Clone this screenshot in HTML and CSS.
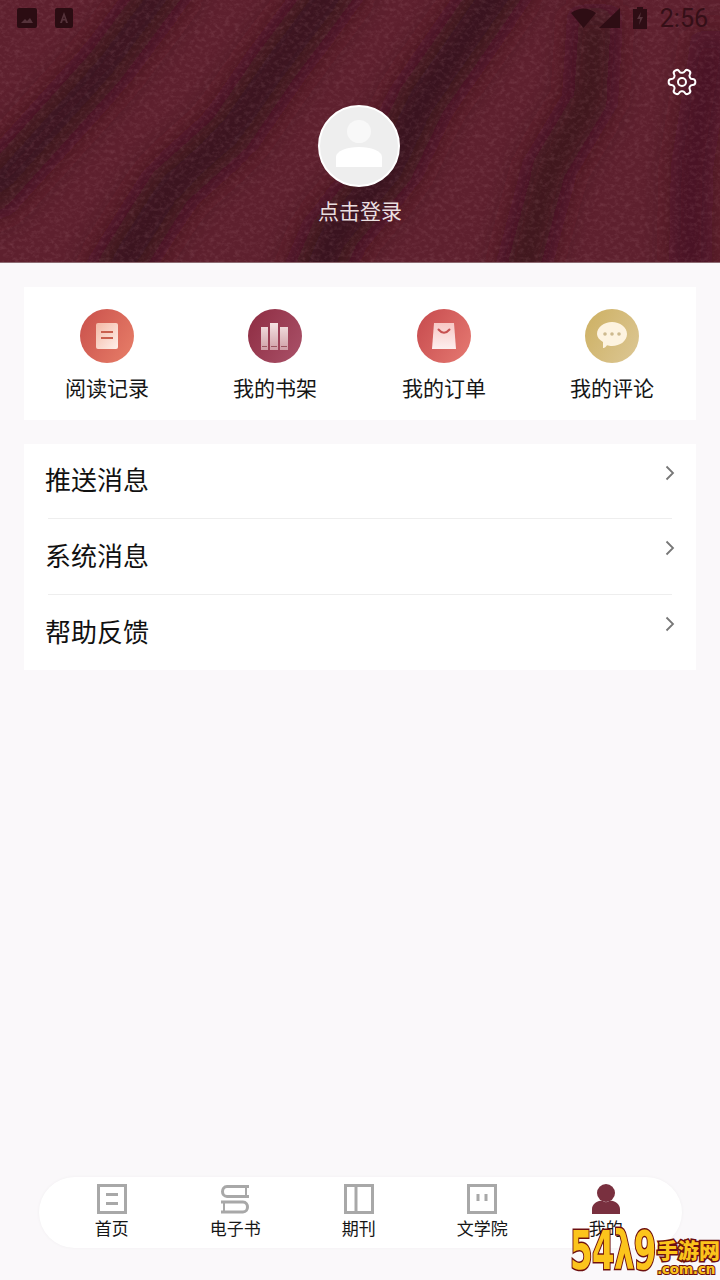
FILE: index.html
```html
<!DOCTYPE html>
<html>
<head>
<meta charset="utf-8">
<meta name="viewport" content="width=720">
<title>我的</title>
<link rel="stylesheet" href="styles.css">
</head>
<body>
<div class="page">
<header class="hero">
 <svg class="hero-bg" width="720" height="262" viewBox="0 0 720 262" preserveAspectRatio="none">
  <defs>
   <filter id="blur" x="-30%" y="-30%" width="160%" height="160%"><feGaussianBlur stdDeviation="17"/></filter>
   <filter id="grain" x="0" y="0" width="100%" height="100%">
    <feTurbulence type="fractalNoise" baseFrequency="0.2 0.26" numOctaves="4" seed="7"/>
    <feColorMatrix type="matrix" values="0 0 0 0 0.62  0 0 0 0 0.34  0 0 0 0 0.38  1.5 0 0 0 -0.66"/>
   </filter>
  </defs>
  <rect width="720" height="262" fill="#5e202e"/>
  <g fill="none" stroke="#2a0e14" stroke-linecap="round" filter="url(#blur)" opacity="0.8">
   <path d="M170 -20L105 67L60 117L-10 195" stroke-width="40"/>
   <path d="M340 -20L275 67L230 133L170 187L115 275" stroke-width="44"/>
   <path d="M505 -20L450 60L422 100L390 167L335 233L315 280" stroke-width="48"/>
   <path d="M595 20L590 100L550 167L520 280" stroke-width="34"/>
   <path d="M712 40L692 167L690 280" stroke-width="22"/>
  </g>
  <rect width="720" height="262" filter="url(#grain)" opacity="0.22"/>
 </svg>
 <div class="status">
  <div class="status-left">
   <svg width="20" height="20" viewBox="0 0 20 20"><rect width="20" height="20" rx="2" fill="#2b0c12"/><path d="M4 15l4-4 2 2 3-3 3 5z" fill="#55323a"/></svg>
   <svg width="18" height="20" viewBox="0 0 18 20"><rect width="18" height="20" rx="2" fill="#2b0c12"/><path d="M9 4l4 11h-2l-.8-2.500H7.800L7 15H5zM8.300 11h1.400L9 8.500z" fill="#55323a"/></svg>
  </div>
  <div class="status-right">
   <svg width="25" height="20" viewBox="0 0 25 20"><path d="M0 5Q12.500 -4 25 5L12.500 20z" fill="#2e0d14"/></svg>
   <svg width="21" height="20" viewBox="0 0 21 20"><path d="M21 0V20H0z" fill="#2e0d14"/></svg>
   <svg class="battery" width="14" height="22" viewBox="0 0 14 22"><path d="M4 0h6v2h4v20H0V2h4z" fill="#2e0d14"/><path d="M8 5l-4 7h3l-1 6 4-8H7z" fill="#55323a"/></svg>
   <span class="time">2:56</span>
  </div>
 </div>
 <div class="toolbar">
  <svg class="gear" width="32" height="32" viewBox="0 0 24 24" fill="none" stroke="#fff" stroke-width="1.500" stroke-linejoin="round"><g transform="rotate(90 12 12)"><path d="M12.220 2h-.44a2 2 0 0 0-2 2v.18a2 2 0 0 1-1 1.730l-.43.25a2 2 0 0 1-2 0l-.15-.08a2 2 0 0 0-2.730.73l-.22.38a2 2 0 0 0 .73 2.730l.15.1a2 2 0 0 1 1 1.720v.51a2 2 0 0 1-1 1.740l-.15.09a2 2 0 0 0-.73 2.730l.22.38a2 2 0 0 0 2.730.73l.15-.08a2 2 0 0 1 2 0l.43.25a2 2 0 0 1 1 1.730V20a2 2 0 0 0 2 2h.44a2 2 0 0 0 2-2v-.18a2 2 0 0 1 1-1.730l.43-.25a2 2 0 0 1 2 0l.15.08a2 2 0 0 0 2.730-.73l.22-.39a2 2 0 0 0-.73-2.730l-.15-.08a2 2 0 0 1-1-1.740v-.5a2 2 0 0 1 1-1.740l.15-.09a2 2 0 0 0 .73-2.730l-.22-.38a2 2 0 0 0-2.730-.73l-.15.08a2 2 0 0 1-2 0l-.43-.25a2 2 0 0 1-1-1.730V4a2 2 0 0 0-2-2z"/><circle cx="12" cy="12" r="3"/></g></svg>
 </div>
 <div class="profile">
  <div class="avatar">
   <svg width="48" height="48" viewBox="0 0 48 48"><ellipse cx="24" cy="11.500" rx="12" ry="11.500" fill="#f8f8f8"/><path d="M1 47V37C1 31 12 27 24 27S47 31 47 37V47z" fill="#fff"/></svg>
  </div>
  <div class="login">点击登录</div>
 </div>
</header>

<section class="card shortcuts">
 <div class="shortcut">
  <div class="disc disc-read">
   <svg width="24" height="28" viewBox="0 0 24 28"><defs><linearGradient id="p1" x1="0" y1="0" x2="1" y2="1"><stop offset="0" stop-color="#f3b9a6"/><stop offset="1" stop-color="#fff0ea"/></linearGradient></defs><rect x="1" y="1" width="22" height="26" rx="2" fill="url(#p1)"/><path d="M6 9h12v2H6zM6 15h12v2H6z" fill="#c9604f"/></svg>
  </div>
  <span>阅读记录</span>
 </div>
 <div class="shortcut">
  <div class="disc disc-shelf">
   <svg width="28" height="28" viewBox="0 0 28 28"><defs><linearGradient id="p2" x1="0" y1="0" x2="0" y2="1"><stop offset="0" stop-color="#f5e3e3"/><stop offset="1" stop-color="#cf9ea6"/></linearGradient></defs><path d="M0 5h7v23H0zM9 1h8v27H9zM19 5h8v23h-8z" fill="url(#p2)"/><path d="M1 24h5v1H1zM10 24h6v1h-6zM20 24h6v1h-6z" fill="#9a5560"/></svg>
  </div>
  <span>我的书架</span>
 </div>
 <div class="shortcut">
  <div class="disc disc-order">
   <svg width="24" height="26" viewBox="0 0 24 26"><defs><linearGradient id="p3" x1="0" y1="0" x2="0" y2="1"><stop offset="0" stop-color="#f7c8c5"/><stop offset="1" stop-color="#fdeeee"/></linearGradient></defs><path d="M2 0h20l2 26H0z" fill="url(#p3)"/><path d="M6.500 6.500Q12 13 17.500 6.500" fill="none" stroke="#c65050" stroke-width="2" stroke-linecap="round"/></svg>
  </div>
  <span>我的订单</span>
 </div>
 <div class="shortcut">
  <div class="disc disc-comment">
   <svg width="30" height="28" viewBox="0 0 30 28"><path d="M15 0C23 0 30 5 30 12S23 24 15 24C13 24 11.500 23.800 10 23.300C9 25 7 26.500 6 26V20C2.500 18 0 15 0 12C0 5 7 0 15 0z" fill="#fdf3e0"/><circle cx="8" cy="12" r="1.800" fill="#cdb98e"/><circle cx="15" cy="12" r="1.800" fill="#cdb98e"/><circle cx="22" cy="12" r="1.800" fill="#cdb98e"/></svg>
  </div>
  <span>我的评论</span>
 </div>
</section>

<section class="card menu">
 <div class="row"><span>推送消息</span><svg class="chev" width="10" height="16" viewBox="0 0 10 16"><path d="M1.500 1.500L8 8L1.500 14.500" fill="none" stroke="#777" stroke-width="1.800"/></svg></div>
 <div class="row"><span>系统消息</span><svg class="chev" width="10" height="16" viewBox="0 0 10 16"><path d="M1.500 1.500L8 8L1.500 14.500" fill="none" stroke="#777" stroke-width="1.800"/></svg></div>
 <div class="row"><span>帮助反馈</span><svg class="chev" width="10" height="16" viewBox="0 0 10 16"><path d="M1.500 1.500L8 8L1.500 14.500" fill="none" stroke="#777" stroke-width="1.800"/></svg></div>
</section>

<div class="spacer"></div>

<nav class="tabbar">
 <div class="tab">
  <svg width="30" height="30" viewBox="0 0 30 30" fill="none" stroke="#a8a8a8" stroke-width="3"><rect x="1.500" y="1.500" width="27" height="27"/><path d="M9 10.500h12M9 19.500h12"/></svg>
  <span>首页</span>
 </div>
 <div class="tab">
  <svg width="30" height="30" viewBox="0 0 30 30" fill="none" stroke="#a8a8a8" stroke-width="3"><path d="M29 2.500H7C1 2.500 1 12.500 7 12.500H29"/><path d="M1 18H23C29 18 29 28 23 28H1"/><path d="M26 3v9M4 18v10" stroke-width="2"/></svg>
  <span>电子书</span>
 </div>
 <div class="tab">
  <svg width="30" height="30" viewBox="0 0 30 30" fill="none" stroke="#a8a8a8" stroke-width="3"><rect x="1.500" y="1.500" width="27" height="27"/><path d="M12 1.500v27"/></svg>
  <span>期刊</span>
 </div>
 <div class="tab">
  <svg width="30" height="30" viewBox="0 0 30 30" fill="none" stroke="#a8a8a8" stroke-width="3"><rect x="1.500" y="1.500" width="27" height="27"/><path d="M11 10v7M19 10v7"/></svg>
  <span>文学院</span>
 </div>
 <div class="tab">
  <svg width="30" height="30" viewBox="0 0 30 30" fill="#79303f"><circle cx="15" cy="9" r="9"/><path d="M1 30V25C1 20 6 17 11 16.500Q15 20 19 16.500C24 17 29 20 29 25V30z"/></svg>
  <span>我的</span>
 </div>
</nav>

<div class="watermark"><span class="wm-num">54λ9</span><span class="wm-side"><b>手游网</b><b class="wm-url">.com.cn</b></span></div>
</div>
</body>
</html>
```

FILE: styles.css
```css
* {
 box-sizing: border-box;
}
html, body {
 margin: 0;
 padding: 0;
}
body {
 font-family: "Noto Sans CJK SC", "Noto Sans", sans-serif;
 background: #faf8fa;
 color: #111;
}
.page {
 position: relative;
 width: 720px;
 height: 1280px;
 overflow: hidden;
 display: flex;
 flex-direction: column;
}
.hero {
 position: relative;
 height: 263px;
 flex: none;
 border-bottom: 1px solid #8d6b72;
}
.hero-bg {
 position: absolute;
 left: 0;
 top: 0;
}
.status {
 position: relative;
 height: 38px;
 display: flex;
 justify-content: space-between;
 align-items: center;
 padding: 0 12px 2px 17px;
}
.status-left, .status-right {
 display: flex;
 align-items: center;
}
.status-left {
 gap: 18px;
}
.status-right {
 gap: 3px;
}
.battery {
 margin-left: 10px;
}
.time {
 margin-left: 10px;
 font-family: Roboto, sans-serif;
 font-size: 25px;
 color: #350f17;
}
.toolbar {
 position: relative;
 height: 67px;
 display: flex;
 justify-content: flex-end;
 align-items: flex-start;
 padding: 28px 22px 0 0;
}
.profile {
 position: relative;
 display: flex;
 flex-direction: column;
 align-items: center;
}
.avatar {
 width: 82px;
 height: 82px;
 margin-right: 2px;
 border-radius: 50%;
 background: #eeeeee;
 border: 2px solid #fff;
 display: flex;
 align-items: center;
 justify-content: center;
 padding-bottom: 4px;
}
.login {
 margin-top: 8px;
 font-size: 21px;
 line-height: 30px;
 color: #eadfe0;
}
.card {
 background: #fff;
 margin: 0 24px;
 flex: none;
}
.shortcuts {
 margin-top: 24px;
 height: 133px;
 display: grid;
 grid-template-columns: 166px 170px 168px 168px;
 padding-top: 22px;
}
.shortcut {
 display: flex;
 flex-direction: column;
 align-items: center;
 font-size: 21px;
 line-height: 30px;
 color: #161616;
}
.shortcut span {
 margin-top: 9px;
}
.disc {
 width: 54px;
 height: 54px;
 border-radius: 50%;
 display: flex;
 align-items: center;
 justify-content: center;
}
.disc-read {
 background: linear-gradient(120deg, #c9504b, #e87f69);
}
.disc-shelf {
 background: linear-gradient(120deg, #8e2c42, #aa5269);
}
.disc-order {
 background: linear-gradient(120deg, #c64a4d, #e67a72);
}
.disc-comment {
 background: linear-gradient(120deg, #cdb062, #dcc795);
}
.menu {
 margin-top: 24px;
 height: 226px;
 padding: 0 24px;
}
.row {
 height: 76px;
 display: flex;
 justify-content: space-between;
 align-items: center;
 font-size: 26px;
 color: #111;
 border-bottom: 1px solid #eeeeee;
}
.row:first-child {
 height: 75px;
}
.row:last-child {
 height: 75px;
 border-bottom: 0;
}
.row span {
 margin: 0 0 5px -3px;
}
.chev {
 margin: 0 -3px 17px 0;
}
.spacer {
 flex: 1;
}
.tabbar {
 flex: none;
 margin: 0 38px 32px 39px;
 height: 71px;
 border-radius: 36px;
 background: #fff;
 box-shadow: 0 0 3px #f0eef0;
 display: grid;
 grid-template-columns: repeat(5, 123.5px);
 padding-left: 11px;
}
.tab {
 display: flex;
 flex-direction: column;
 align-items: center;
 padding-top: 7px;
 font-size: 17px;
 line-height: 26px;
 color: #161616;
}
.tab span {
 margin-top: 1px;
}
.watermark {
 position: absolute;
 right: 0;
 bottom: 0;
 width: 150px;
 height: 52px;
 display: flex;
 font-weight: bold;
 color: #fbc41c;
 -webkit-text-stroke: 3px #6d0f0f;
 paint-order: stroke fill;
}
.wm-num {
 font-family: "DejaVu Sans", sans-serif;
 font-size: 54px;
 line-height: 46px;
 letter-spacing: -1px;
 width: 87px;
 flex: none;
 white-space: nowrap;
 transform: scaleX(0.6);
 transform-origin: left center;
}
.wm-side {
 display: flex;
 flex-direction: column;
 padding-top: 10px;
}
.wm-side b {
 font-size: 21px;
 line-height: 22px;
 height: 22px;
 white-space: nowrap;
 font-family: "Noto Sans CJK SC", sans-serif;
 font-weight: 900;
}
.wm-side .wm-url {
 font-size: 14px;
 line-height: 16px;
 height: 16px;
 margin-top: 1px;
 font-family: "DejaVu Sans", sans-serif;
 letter-spacing: -0.5px;
 -webkit-text-stroke-width: 2px;
}
```
